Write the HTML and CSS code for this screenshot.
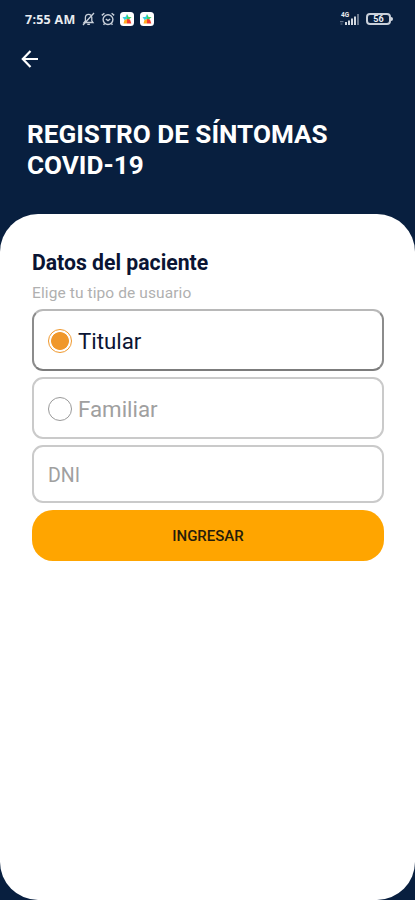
FILE: index.html
```html
<!DOCTYPE html>
<html lang="es">
<head>
    <meta charset="UTF-8">
    <meta name="viewport" content="width=device-width, initial-scale=1.0">
    <title>Registro de síntomas COVID-19</title>
    <link rel="stylesheet" href="styles.css">
</head>
<body>
    <div class="status-bar">
        <span class="time">7:55 AM</span>
        <div class="status-icons">
            <!-- muted bell -->
            <svg width="13" height="14" viewBox="0 0 13 14" fill="none" stroke="#c9d0da" stroke-width="1.3">
                <path d="M2 10.5h9L9.8 8.8V5.5a3.2 3.2 0 0 0-6.4 0v3.3zM5.3 12.3h2.6M12 1 1 13"/>
            </svg>
            <!-- alarm clock -->
            <svg width="14" height="14" viewBox="0 0 14 14" fill="none" stroke="#c9d0da" stroke-width="1.4">
                <circle cx="7" cy="7.6" r="4.9"/>
                <path d="M.8 3.4 3.4 1.2M13.2 3.4 10.6 1.2M4.8 7l2.2 1.6L9.2 7M3.6 11.4l-1 1.4M10.4 11.4l1 1.4"/>
            </svg>
            <svg class="app" width="14" height="14" viewBox="0 0 14 14">
                <rect width="14" height="14" rx="3.5" fill="#fff"/>
                <path d="M2.5 5h3L7 2v5L4.5 8z" fill="#35cfe0"/>
                <path d="M7 2l1.6 3h3L8.5 8 7 7z" fill="#3bd36b"/>
                <path d="M3.5 11.5 4.5 8 7 7v4.5z" fill="#ffad21"/>
                <path d="M7 7l3 .5 1.3 4H7z" fill="#f03c32"/>
            </svg>
            <svg class="app" width="14" height="14" viewBox="0 0 14 14">
                <rect width="14" height="14" rx="3.5" fill="#fff"/>
                <path d="M2.5 5h3L7 2v5L4.5 8z" fill="#35cfe0"/>
                <path d="M7 2l1.6 3h3L8.5 8 7 7z" fill="#3bd36b"/>
                <path d="M3.5 11.5 4.5 8 7 7v4.5z" fill="#ffad21"/>
                <path d="M7 7l3 .5 1.3 4H7z" fill="#f03c32"/>
            </svg>
        </div>
        <div class="status-right">
            <div class="signal">
                <span class="network">4G</span>
                <svg width="22" height="14" viewBox="0 0 22 14" fill="#d3d9e1">
                    <path d="M6 10h2v3H6zM9 8.5h2V13H9zM12 6.5h2V13h-2zM15 4.5h2V13h-2z"/>
                    <path d="M18 2h2v11h-2z" fill="#66758b"/>
                    <path d="M1 9h3.5v1.2H1zM1.5 11.5h2v1h-2z" fill="#66758b"/>
                </svg>
            </div>
            <div class="battery"><span>56</span></div>
        </div>
    </div>
    <header class="header">
        <a class="back" href="#" aria-label="Volver">
            <svg width="18" height="18" viewBox="0 0 18 18" fill="none" stroke="#fff" stroke-width="2.2">
                <path d="M17 9H2M9.5 1 1.8 9l7.7 8"/>
            </svg>
        </a>
        <h1>REGISTRO DE SÍNTOMAS COVID-19</h1>
    </header>
    <main class="card">
        <h2>Datos del paciente</h2>
        <p class="hint">Elige tu tipo de usuario</p>
        <form class="form">
            <label class="option selected">
                <input type="radio" name="tipo" checked>
                <span>Titular</span>
            </label>
            <label class="option">
                <input type="radio" name="tipo">
                <span>Familiar</span>
            </label>
            <input class="dni" type="text" placeholder="DNI">
            <button class="submit" type="button">INGRESAR</button>
        </form>
    </main>
</body>
</html>
```
FILE: styles.css
```css
* {
    box-sizing: border-box;
}
body {
    margin: 0;
    height: 100vh;
    display: flex;
    flex-direction: column;
    overflow: hidden;
    background-color: #081f3f;
    font-family: Roboto, "Liberation Sans", sans-serif;
}
.status-bar {
    height: 38px;
    padding: 0 24px 0 25px;
    display: flex;
    align-items: center;
    color: #e8ecf1;
}
.time {
    width: 57px;
    font-family: "Open Sans", sans-serif;
    font-size: 12.5px;
    font-weight: 700;
    letter-spacing: 0.25px;
    white-space: nowrap;
}
.status-icons {
    display: flex;
    align-items: center;
    gap: 5.5px;
}
.status-right {
    margin-left: auto;
    display: flex;
    align-items: center;
    gap: 5px;
}
.signal {
    position: relative;
    display: flex;
}
.network {
    position: absolute;
    left: 2px;
    top: 0;
    font-size: 6.5px;
    line-height: 6px;
    font-weight: 700;
}
.battery {
    position: relative;
    width: 25px;
    height: 12px;
    border: 2px solid #c9d0da;
    border-radius: 4px;
    display: flex;
    align-items: center;
    justify-content: center;
    font-size: 9px;
    font-weight: 700;
    line-height: 8px;
}
.battery::after {
    content: "";
    position: absolute;
    right: -4px;
    top: 2px;
    width: 2px;
    height: 4px;
    border-radius: 0 2px 2px 0;
    background: #d3d9e1;
}
.header {
    height: 176px;
    padding: 12px 27px 0 21px;
}
.back {
    display: block;
    width: 18px;
    height: 18px;
}
.header h1 {
    margin: 51px 0 0 6px;
    width: 320px;
    font-size: 26.1px;
    line-height: 31px;
    font-weight: 700;
    color: #fff;
}
.card {
    flex: 1;
    padding: 36px 31px 0 32px;
    border-radius: 38px;
    background: #fff;
}
.card h2 {
    margin: 0;
    font-size: 21.2px;
    line-height: 26px;
    font-weight: 700;
    color: #0a1433;
}
.hint {
    margin: 8px 0 6px;
    font-size: 15.5px;
    line-height: 19px;
    letter-spacing: 0.1px;
    color: #b0b0b0;
}
.form {
    display: flex;
    flex-direction: column;
    gap: 6px;
}
.option {
    height: 62px;
    padding: 2px 14px 0;
    display: flex;
    align-items: center;
    gap: 6px;
    border: 2px solid #cacaca;
    border-radius: 11px;
    font-size: 22.3px;
    color: #a0a0a0;
}
.option.selected {
    border-color: #b8b8b8 #8c8c8c #7c7c7c;
    color: #0a1433;
}
.option input {
    appearance: none;
    margin: 0;
    width: 24px;
    height: 24px;
    border: 1px solid #999;
    border-radius: 50%;
}
.option input:checked {
    border-color: #f0982c;
    background: radial-gradient(circle, #f0982c 8.5px, #fff 9.3px);
}
.dni {
    height: 58px;
    padding: 2px 14px 0;
    border: 2px solid #cacaca;
    border-radius: 11px;
    font-family: inherit;
    font-size: 19.5px;
    outline: none;
}
.dni::placeholder {
    color: #a0a0a0;
}
.submit {
    height: 51px;
    margin-top: 1px;
    border: none;
    border-radius: 21px;
    background: #ffa500;
    font-family: inherit;
    font-size: 15px;
    font-weight: 500;
    color: #261c0a;
}
```
